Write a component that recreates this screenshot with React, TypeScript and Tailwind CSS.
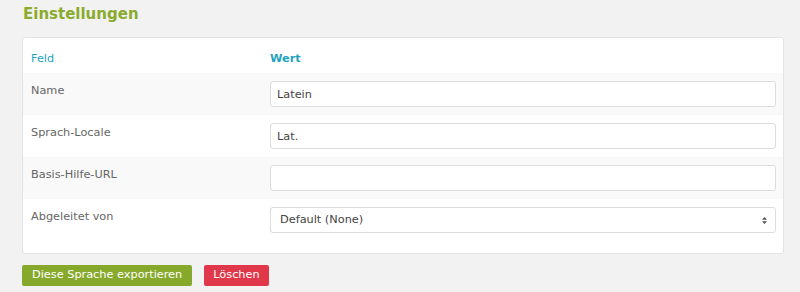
const rows = [
  { label: "Name", value: "Latein" },
  { label: "Sprach-Locale", value: "Lat." },
  { label: "Basis-Hilfe-URL", value: "" },
];

export default function App() {
  return (
    <div className="w-[800px] h-[292px] bg-[#f2f2f2] px-[22px] pt-[3px] font-['DejaVu_Sans',Verdana,sans-serif] text-[11.3px] text-[#666]">
      <h1 className="pl-[1px] text-[15px] font-bold text-[#8aab2d] leading-[22px]">Einstellungen</h1>

      {/* Settings table */}
      <div className="mt-[12px] w-[762px] bg-white border border-[#e3e3e3] rounded-[3px] pb-[12px]">
        <div className="flex h-[35px] pt-[13px] text-[#1fa3c1]">
          <div className="w-[247px] pl-[8px]">Feld</div>
          <div className="font-bold">Wert</div>
        </div>

        {rows.map((row, i) => (
          <div key={row.label} className={`flex h-[42px] ${i % 2 === 0 ? "bg-[#f9f9f9]" : "bg-white"}`}>
            <div className="w-[247px] pl-[8px] pt-[10px]">{row.label}</div>
            <div className="pt-[8px]">
              <input
                defaultValue={row.value}
                className="w-[506px] h-[26px] px-[6px] bg-white border border-[#dcdcdc] rounded-[3px] text-[11.3px] text-[#444] outline-none"
              />
            </div>
          </div>
        ))}

        <div className="flex h-[42px] bg-white">
          <div className="w-[247px] pl-[8px] pt-[10px]">Abgeleitet von</div>
          <div className="pt-[8px]">
            <div className="w-[506px] h-[26px] pl-[9px] pr-[8px] flex items-center justify-between border border-[#dcdcdc] rounded-[3px] text-[#444]">
              <span>Default (None)</span>
              <svg width="5" height="7" viewBox="0 0 5 7" className="text-[#555]">
                <path d="M2.5 0 L5 2.8 L0 2.8 Z M0 4.2 L5 4.2 L2.5 7 Z" fill="currentColor" />
              </svg>
            </div>
          </div>
        </div>
      </div>

      <div className="flex gap-[12px] mt-[11px]">
        <button className="h-[21px] px-[10px] bg-[#86a92c] text-white rounded-[2px] text-[11.3px]">Diese Sprache exportieren</button>
        <button className="h-[21px] px-[9px] bg-[#e0384a] text-white rounded-[2px] text-[11.3px]">Löschen</button>
      </div>
    </div>
  );
}
